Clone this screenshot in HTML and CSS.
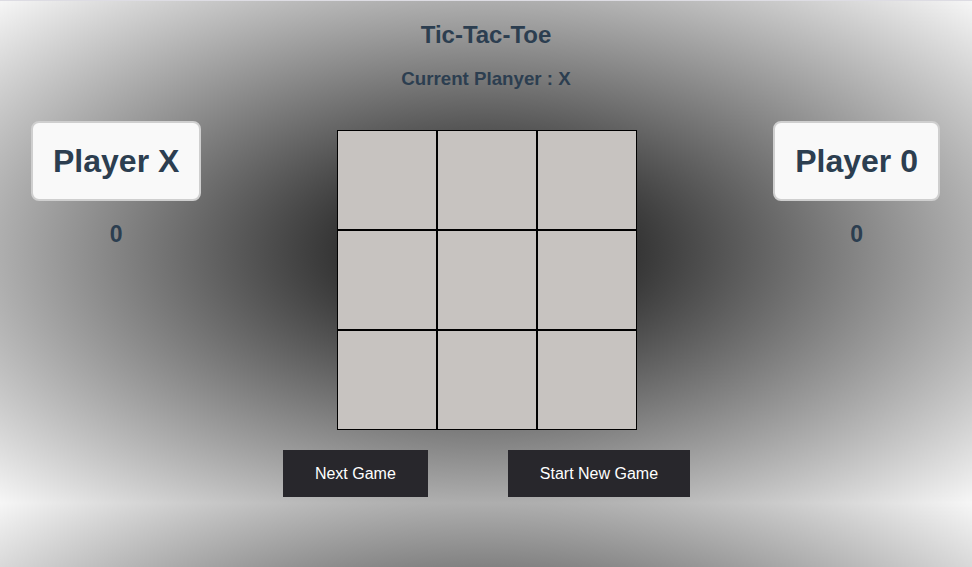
FILE: index.html
```html
<!DOCTYPE html>
<html lang="en">
<head>
<meta charset="utf-8">
<title>Tic-Tac-Toe</title>
<link rel="stylesheet" href="styles.css">
</head>
<body>
<main class="game">
  <h1 class="title">Tic-Tac-Toe</h1>
  <h2 class="status">Current Planyer : X</h2>
  <div class="arena">
    <div class="player">
      <div class="card">Player X</div>
      <div class="score">0</div>
    </div>
    <div class="board">
      <div class="cell"></div><div class="cell"></div><div class="cell"></div>
      <div class="cell"></div><div class="cell"></div><div class="cell"></div>
      <div class="cell"></div><div class="cell"></div><div class="cell"></div>
    </div>
    <div class="player">
      <div class="card">Player 0</div>
      <div class="score">0</div>
    </div>
  </div>
  <div class="controls">
    <button class="btn">Next Game</button>
    <button class="btn">Start New Game</button>
  </div>
</main>
</body>
</html>
```

FILE: styles.css
```css
html {
  background-color: #e9e9e9;
  background-image: radial-gradient(ellipse farthest-corner at center, #000000 0%, #f6f6f6 100%);
  background-size: 100% 502px;
  background-position: 0 1px;
  background-repeat: repeat-y;
}

body {
  margin: 0;
  border-top: 1px solid #dddce3;
  font-family: "Liberation Sans", Arial, sans-serif;
  color: #2c3e50;
}

.game {
  padding-top: 20px;
}

.title {
  margin: 0;
  text-align: center;
  font-size: 24px;
  line-height: 28px;
  font-weight: bold;
}

.status {
  margin: 19px 0 0;
  text-align: center;
  font-size: 18.72px;
  line-height: 22px;
  font-weight: bold;
}

.arena {
  margin-top: 31px;
  padding: 0 32px 0 31px;
  display: flex;
  justify-content: space-between;
  align-items: flex-start;
}

.player {
  display: flex;
  flex-direction: column;
  align-items: center;
}

.card {
  background: #f9f9f9;
  border: 2px solid #cfcfcf;
  border-radius: 8px;
  padding: 20px 20px;
  font-size: 32px;
  line-height: 36px;
  font-weight: bold;
  white-space: nowrap;
}

.score {
  margin-top: 19px;
  font-size: 23px;
  line-height: 28px;
  font-weight: bold;
}

.board {
  margin-top: 9px;
  display: grid;
  grid-template-columns: repeat(3, 100px);
  grid-template-rows: repeat(3, 100px);
}

.cell {
  box-sizing: border-box;
  border: 1px solid #000;
  background: #c7c3c0;
}

.controls {
  margin-top: 20px;
  padding-left: 1px;
  display: flex;
  justify-content: center;
  gap: 80px;
}

.btn {
  background: #28272c;
  color: #ffffff;
  border: none;
  border-radius: 0;
  font-family: "Liberation Sans", Arial, sans-serif;
  font-size: 16px;
  line-height: 19px;
  padding: 14px 32px;
  cursor: pointer;
}
```
